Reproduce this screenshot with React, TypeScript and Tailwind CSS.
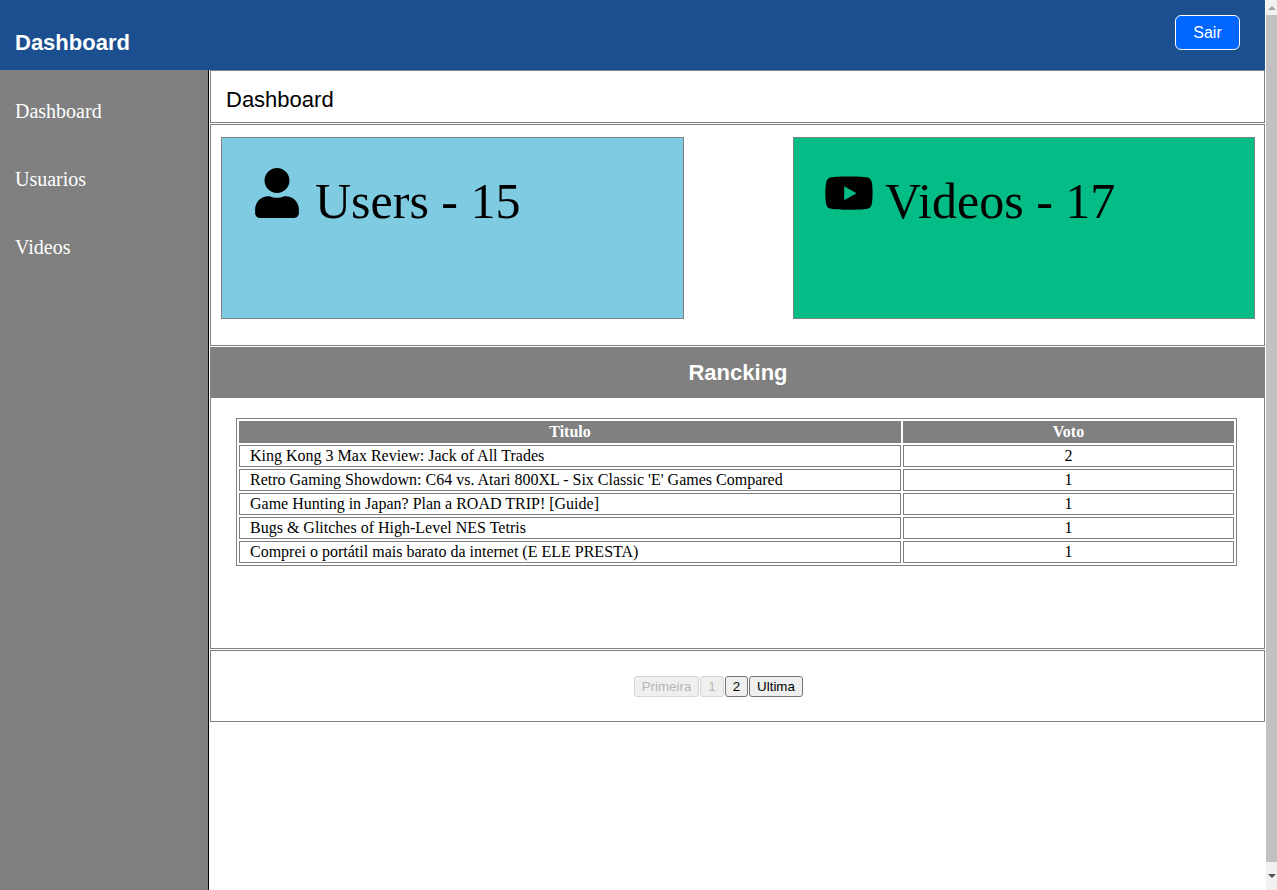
import React from "react";
import { FaUser, FaYoutube } from "react-icons/fa";

const rows = [
  ["King Kong 3 Max Review: Jack of All Trades", "2"],
  ["Retro Gaming Showdown: C64 vs. Atari 800XL - Six Classic 'E' Games Compared", "1"],
  ["Game Hunting in Japan? Plan a ROAD TRIP! [Guide]", "1"],
  ["Bugs & Glitches of High-Level NES Tetris", "1"],
  ["Comprei o portátil mais barato da internet (E ELE PRESTA)", "1"],
];

export default function App() {
  return (
    <div className="h-[890px] overflow-hidden flex bg-white font-['Liberation_Sans',sans-serif]">
      <div className="flex-1 min-w-0 flex flex-col">
        <header className="h-[70px] shrink-0 bg-[#1c4f8f] flex items-start justify-between pl-[15px] pr-[25px]">
          <h1 className="mt-[30px] text-[22px] leading-[26px] font-bold text-white">Dashboard</h1>
          <button className="mt-[15px] w-[65px] h-[35px] bg-[#0066ff] border border-white rounded-md text-white text-base">
            Sair
          </button>
        </header>

        <div className="flex-1 flex min-h-0">
          <nav className="w-[209px] shrink-0 bg-[#808080] border-r border-black pt-[7px] font-['Liberation_Serif',serif] text-xl text-white">
            <a className="flex items-center h-[68px] pl-[15px]">Dashboard</a>
            <a className="flex items-center h-[68px] pl-[15px]">Usuarios</a>
            <a className="flex items-center h-[68px] pl-[15px]">Videos</a>
          </nav>

          <main className="flex-1 min-w-0 pl-px">
            <section className="h-[53px] border border-[#808080] pl-[15px] pt-[16px] text-[22px] leading-[26px] text-black">
              Dashboard
            </section>

            <section className="mt-px h-[222px] border border-[#808080] flex justify-between pt-[12px] pl-[10px] pr-[9px] font-['Liberation_Serif',serif] text-[50px] leading-[57px] text-black">
              <div className="w-[463px] h-[182px] bg-[#7fcce2] border border-[#808080] flex items-start pl-[33px] pt-[30px]">
                <FaUser size={50} className="shrink-0 w-[44px]" />
                <span className="ml-[16px] mt-[5px]">Users - 15</span>
              </div>
              <div className="w-[462px] h-[182px] bg-[#04bc86] border border-[#808080] flex items-start pl-[30px] pt-[33px]">
                <FaYoutube size={44.3} className="shrink-0 w-[50px]" />
                <span className="ml-[11px] mt-[2px]">Videos - 17</span>
              </div>
            </section>

            <h2 className="mt-px h-[51px] bg-[#808080] flex items-center justify-center pl-px text-[22px] font-bold text-white">
              Rancking
            </h2>

            <section className="h-[251px] border-x border-b border-[#808080] pl-[25px] pr-[27px] pt-[20px] font-['Liberation_Serif',serif] text-base text-black">
              <table className="w-[1001px] border border-[#808080] border-separate border-spacing-[2px] table-fixed">
                <thead>
                  <tr>
                    <th className="w-[662px] h-[22px] bg-[#808080] text-white font-bold p-0 leading-[18px]">Titulo</th>
                    <th className="bg-[#808080] text-white font-bold p-0 leading-[18px]">Voto</th>
                  </tr>
                </thead>
                <tbody>
                  {rows.map((r) => (
                    <tr key={r[0]}>
                      <td className="h-[22px] border border-[#808080] pl-[10px] py-px leading-[18px]">{r[0]}</td>
                      <td className="h-[22px] border border-[#808080] text-center py-px leading-[18px]">{r[1]}</td>
                    </tr>
                  ))}
                </tbody>
              </table>
            </section>

            <section className="mt-px h-[72px] border border-[#808080] flex items-start justify-center gap-px pr-[38px] pt-[25px] text-[13.33px] leading-[15px]">
              <button disabled className="w-[65px] h-[21px] bg-[#efefef] border border-[#d5d5d5] rounded-[3px] text-[#b5b5b5]">Primeira</button>
              <button disabled className="w-[24px] h-[21px] bg-[#efefef] border border-[#d5d5d5] rounded-[3px] text-[#b5b5b5]">1</button>
              <button className="w-[23px] h-[21px] bg-[#efefef] border border-[#767676] rounded-[3px] text-black">2</button>
              <button className="w-[54px] h-[21px] bg-[#efefef] border border-[#767676] rounded-[3px] text-black">Ultima</button>
            </section>
          </main>
        </div>
      </div>

      {/* scrollbar */}
      <div className="w-[12px] shrink-0 bg-[#f1f1f1] border-l border-white flex flex-col items-center">
        <div className="h-[15px] shrink-0 flex items-center justify-center">
          <div className="w-0 h-0 border-x-[4px] border-x-transparent border-b-[4px] border-b-[#a3a3a3]" />
        </div>
        <div className="w-full h-[847px] bg-[#c1c1c1]" />
        <div className="flex-1 flex items-center justify-center">
          <div className="w-0 h-0 border-x-[4px] border-x-transparent border-t-[4px] border-t-[#505050]" />
        </div>
      </div>
    </div>
  );
}
